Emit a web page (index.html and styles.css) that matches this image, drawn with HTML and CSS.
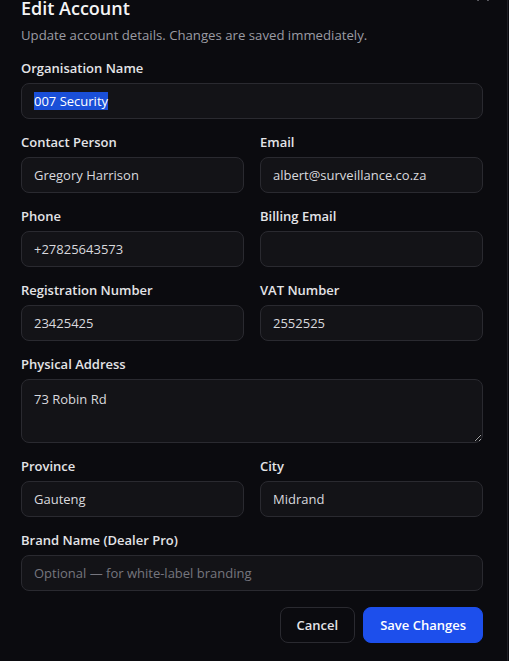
FILE: index.html
```html
<!DOCTYPE html>
<html lang="en">
<head>
    <meta charset="UTF-8">
    <meta name="viewport" content="width=device-width, initial-scale=1.0">
    <title>Edit Account</title>
    <link rel="stylesheet" href="styles.css">
</head>
<body>

<div class="dialog">
    <button class="close" aria-label="Close">
        <svg width="14" height="14" viewBox="0 0 14 14"><path d="M2 2l10 10M12 2L2 12" stroke="currentColor" stroke-width="1.6" stroke-linecap="round"/></svg>
    </button>
    <div class="header">
        <h2>Edit Account</h2>
        <p>Update account details. Changes are saved immediately.</p>
    </div>

    <form class="form">
        <div class="field">
            <label>Organisation Name</label>
            <div class="input"><span class="selected">007 Security</span></div>
        </div>

        <div class="row">
            <div class="field">
                <label>Contact Person</label>
                <input class="input" type="text" value="Gregory Harrison">
            </div>
            <div class="field">
                <label>Email</label>
                <input class="input" type="text" value="albert@surveillance.co.za">
            </div>
        </div>

        <div class="row">
            <div class="field">
                <label>Phone</label>
                <input class="input" type="text" value="+27825643573">
            </div>
            <div class="field">
                <label>Billing Email</label>
                <input class="input" type="text" value="">
            </div>
        </div>

        <div class="row">
            <div class="field">
                <label>Registration Number</label>
                <input class="input" type="text" value="23425425">
            </div>
            <div class="field">
                <label>VAT Number</label>
                <input class="input" type="text" value="2552525">
            </div>
        </div>

        <div class="field">
            <label>Physical Address</label>
            <textarea class="input textarea">73 Robin Rd</textarea>
        </div>

        <div class="row">
            <div class="field">
                <label>Province</label>
                <input class="input" type="text" value="Gauteng">
            </div>
            <div class="field">
                <label>City</label>
                <input class="input" type="text" value="Midrand">
            </div>
        </div>

        <div class="field">
            <label>Brand Name (Dealer Pro)</label>
            <input class="input" type="text" placeholder="Optional — for white-label branding">
        </div>

        <div class="actions">
            <button type="button" class="btn btn-outline">Cancel</button>
            <button type="button" class="btn btn-primary">Save Changes</button>
        </div>
    </form>
</div>

</body>
</html>
```

FILE: styles.css
```css
body {
    margin: 0;
    background-color: #0a0a0e;
    font-family: "Open Sans", "Noto Sans", sans-serif;
    color: #e4e4e7;
    overflow: hidden;
}
.dialog {
    position: relative;
    width: 462px;
    padding: 0 24px 20px 21px;
    border-right: 1px solid #1e1e24;
    background-color: #0b0b0f;
    min-height: 661px;
}
.close {
    position: absolute;
    top: -8px;
    right: 17px;
    background: none;
    border: none;
    color: #a1a1aa;
    padding: 0;
    cursor: pointer;
}
.header {
    margin-top: -4px;
    margin-bottom: 13px;
}
.header h2 {
    margin: 0;
    font-size: 18px;
    line-height: 24px;
    font-weight: 600;
    color: #f4f4f5;
}
.header p {
    margin: 5px 0 0;
    font-size: 13.2px;
    line-height: 20px;
    color: #9b9ba3;
}
.form {
    display: flex;
    flex-direction: column;
    gap: 13px;
}
.row {
    display: grid;
    grid-template-columns: 1fr 1fr;
    gap: 16px;
}
.field {
    display: flex;
    flex-direction: column;
    gap: 5px;
}
.field label {
    font-size: 13px;
    line-height: 20px;
    font-weight: 600;
    color: #e4e4e7;
}
.input {
    box-sizing: border-box;
    width: 100%;
    height: 36px;
    padding: 0 12px;
    border: 1px solid #2a2a30;
    border-radius: 8px;
    background-color: #131317;
    color: #d9d9de;
    font-family: inherit;
    font-size: 13px;
    outline: none;
    display: flex;
    align-items: center;
}
.input::placeholder {
    color: #76767e;
}
.selected {
    background-color: #1a4fd8;
    color: #ffffff;
}
.textarea {
    display: block;
    height: 64px;
    padding: 9px 12px;
    line-height: 20px;
    resize: vertical;
}
.actions {
    display: flex;
    justify-content: flex-end;
    gap: 8px;
    margin-top: 3px;
}
.btn {
    height: 36px;
    padding: 0 16px;
    border-radius: 8px;
    font-family: inherit;
    font-size: 13px;
    font-weight: 600;
    cursor: pointer;
}
.btn-outline {
    background-color: #0b0b0f;
    border: 1px solid #2a2a30;
    color: #e4e4e7;
}
.btn-primary {
    background-color: #1d4fec;
    border: 1px solid #1d4fec;
    color: #ffffff;
}
```
